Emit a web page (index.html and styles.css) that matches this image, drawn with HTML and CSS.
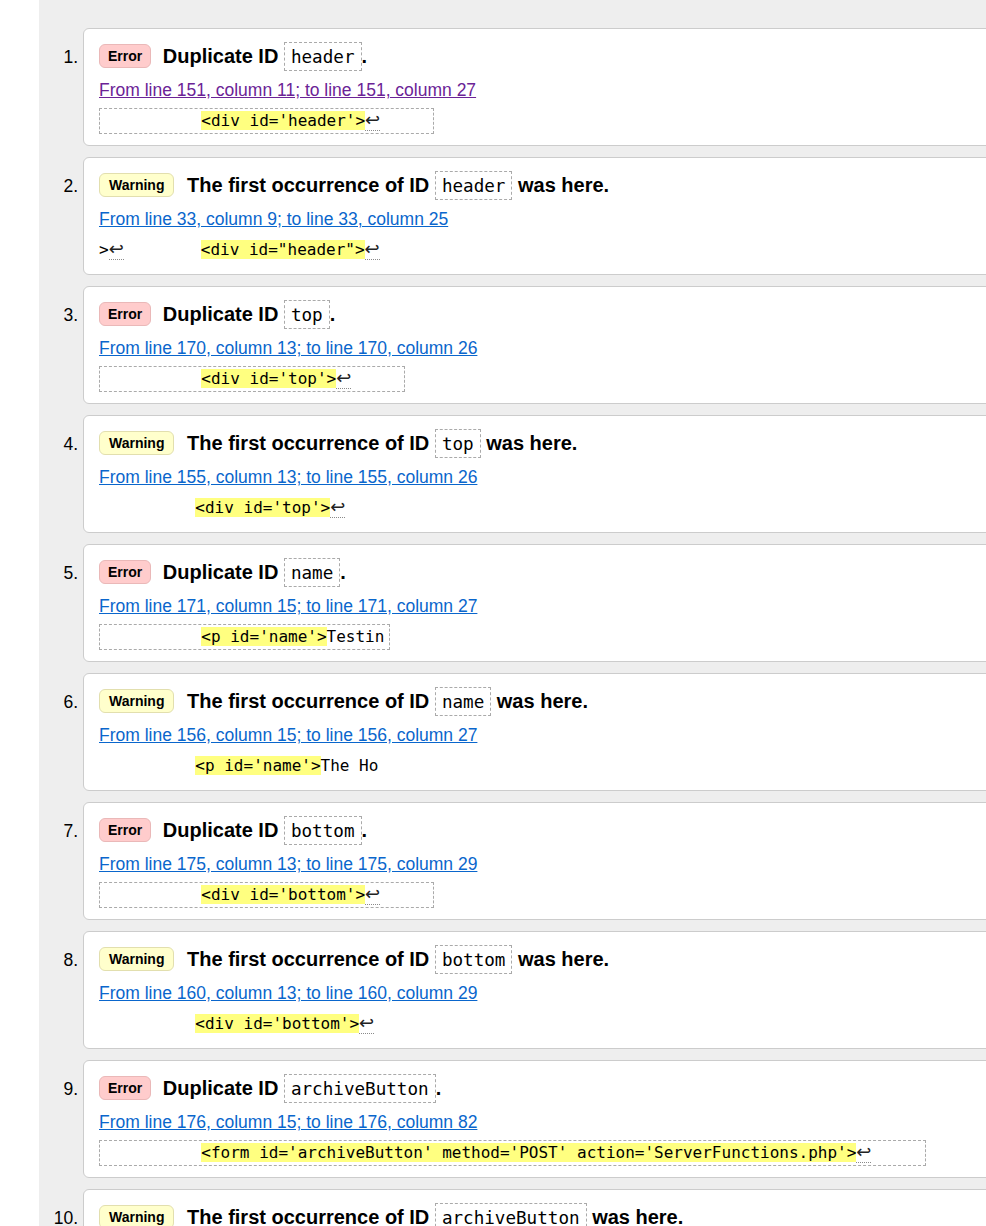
FILE: index.html
```html
<!DOCTYPE html>
<html lang="en">
<head>
<meta charset="utf-8">
<title>Validation results</title>
<link rel="stylesheet" href="styles.css">
</head>
<body>
<div class="results">
  <ol class="messages">
    <li class="msg msg-error">
      <p class="title"><span class="badge badge-error">Error</span> Duplicate ID <code class="id">header</code>.</p>
      <p class="loc"><a class="visited" href="#l151">From line 151, column 11; to line 151, column 27</a></p>
      <p class="extract extract-boxed">          <mark>&lt;div id='header'&gt;</mark><span class="lf">↩</span>     </p>
    </li>
    <li class="msg msg-warning">
      <p class="title"><span class="badge badge-warning">Warning</span> The first occurrence of ID <code class="id">header</code> was here.</p>
      <p class="loc"><a href="#l33">From line 33, column 9; to line 33, column 25</a></p>
      <p class="extract">&gt;<span class="lf">↩</span>        <mark>&lt;div id="header"&gt;</mark><span class="lf">↩</span></p>
    </li>
    <li class="msg msg-error">
      <p class="title"><span class="badge badge-error">Error</span> Duplicate ID <code class="id">top</code>.</p>
      <p class="loc"><a href="#l170">From line 170, column 13; to line 170, column 26</a></p>
      <p class="extract extract-boxed">          <mark>&lt;div id='top'&gt;</mark><span class="lf">↩</span>     </p>
    </li>
    <li class="msg msg-warning">
      <p class="title"><span class="badge badge-warning">Warning</span> The first occurrence of ID <code class="id">top</code> was here.</p>
      <p class="loc"><a href="#l155">From line 155, column 13; to line 155, column 26</a></p>
      <p class="extract">          <mark>&lt;div id='top'&gt;</mark><span class="lf">↩</span></p>
    </li>
    <li class="msg msg-error">
      <p class="title"><span class="badge badge-error">Error</span> Duplicate ID <code class="id">name</code>.</p>
      <p class="loc"><a href="#l171">From line 171, column 15; to line 171, column 27</a></p>
      <p class="extract extract-boxed">          <mark>&lt;p id='name'&gt;</mark>Testin</p>
    </li>
    <li class="msg msg-warning">
      <p class="title"><span class="badge badge-warning">Warning</span> The first occurrence of ID <code class="id">name</code> was here.</p>
      <p class="loc"><a href="#l156">From line 156, column 15; to line 156, column 27</a></p>
      <p class="extract">          <mark>&lt;p id='name'&gt;</mark>The Ho</p>
    </li>
    <li class="msg msg-error">
      <p class="title"><span class="badge badge-error">Error</span> Duplicate ID <code class="id">bottom</code>.</p>
      <p class="loc"><a href="#l175">From line 175, column 13; to line 175, column 29</a></p>
      <p class="extract extract-boxed">          <mark>&lt;div id='bottom'&gt;</mark><span class="lf">↩</span>     </p>
    </li>
    <li class="msg msg-warning">
      <p class="title"><span class="badge badge-warning">Warning</span> The first occurrence of ID <code class="id">bottom</code> was here.</p>
      <p class="loc"><a href="#l160">From line 160, column 13; to line 160, column 29</a></p>
      <p class="extract">          <mark>&lt;div id='bottom'&gt;</mark><span class="lf">↩</span></p>
    </li>
    <li class="msg msg-error">
      <p class="title"><span class="badge badge-error">Error</span> Duplicate ID <code class="id">archiveButton</code>.</p>
      <p class="loc"><a href="#l176">From line 176, column 15; to line 176, column 82</a></p>
      <p class="extract extract-boxed">          <mark>&lt;form id='archiveButton' method='POST' action='ServerFunctions.php'&gt;</mark><span class="lf">↩</span>     </p>
    </li>
    <li class="msg msg-warning">
      <p class="title"><span class="badge badge-warning">Warning</span> The first occurrence of ID <code class="id">archiveButton</code> was here.</p>
      <p class="loc"><a href="#l161">From line 161, column 15; to line 161, column 82</a></p>
      <p class="extract">          <mark>&lt;form id='archiveButton' method='POST' action='ServerFunctions.php'&gt;</mark><span class="lf">↩</span></p>
    </li>
  </ol>
</div>
</body>
</html>
```
FILE: styles.css
```css
html, body {
  margin: 0;
  padding: 0;
  height: 100%;
  overflow: hidden;
  background: #ffffff;
}

body {
  font-family: "Liberation Sans", Arial, sans-serif;
  font-size: 17.5px;
  color: #000;
}

.results {
  margin-left: 39px;
  background: #eeeeee;
  min-height: 100%;
  overflow: hidden;
}

.messages {
  margin: 0;
  padding: 28px 0 0 44px;
  list-style: decimal outside;
}

.msg {
  background: #fff;
  border: 1px solid #cccccc;
  border-radius: 6px;
  margin: 0 -20px 11px 0;
  padding: 12px 15px 11px;
}

.msg::marker {
  font-family: "Liberation Sans", Arial, sans-serif;
  font-size: 17.5px;
}

.title {
  margin: 0;
  font-size: 20px;
  font-weight: bold;
  line-height: 30px;
}

.badge {
  display: inline-block;
  font-size: 14px;
  font-weight: bold;
  line-height: 20px;
  padding: 1px 8px 1px 8px;
  border: 1px solid;
  border-radius: 6px;
  margin-right: 6px;
  vertical-align: 2px;
}

.badge-error {
  background: #ffcccc;
  border-color: #eab8b8;
}

.badge-warning {
  background: #ffffcc;
  border-color: #e2dfae;
  padding: 1px 9px;
  margin-right: 7px;
}

.id {
  font-family: "DejaVu Sans Mono", monospace;
  font-weight: normal;
  font-size: 17.6px;
  border: 1px dashed #aaaaaa;
  padding: 4px 6px 3px;
}

.loc {
  margin: 8px 0 0;
  line-height: 20px;
}

.loc a {
  color: #0a66cc;
  text-decoration: underline;
}

.loc a.visited {
  color: #6b2396;
}

.extract {
  margin: 8px 0 0;
  font-family: "DejaVu Sans Mono", monospace;
  font-size: 16px;
  line-height: 20px;
  white-space: pre;
  padding: 3px 0;
}

.extract-boxed {
  width: fit-content;
  border: 1px dashed #aaaaaa;
  padding: 2px 5px;
}

.extract mark {
  background: #ffff80;
  color: #000;
}

.lf {
  font-family: "DejaVu Sans", sans-serif;
  font-size: 18px;
  line-height: 0;
  color: #222;
  border-bottom: 1px dotted #8a8a8a;
}
```
